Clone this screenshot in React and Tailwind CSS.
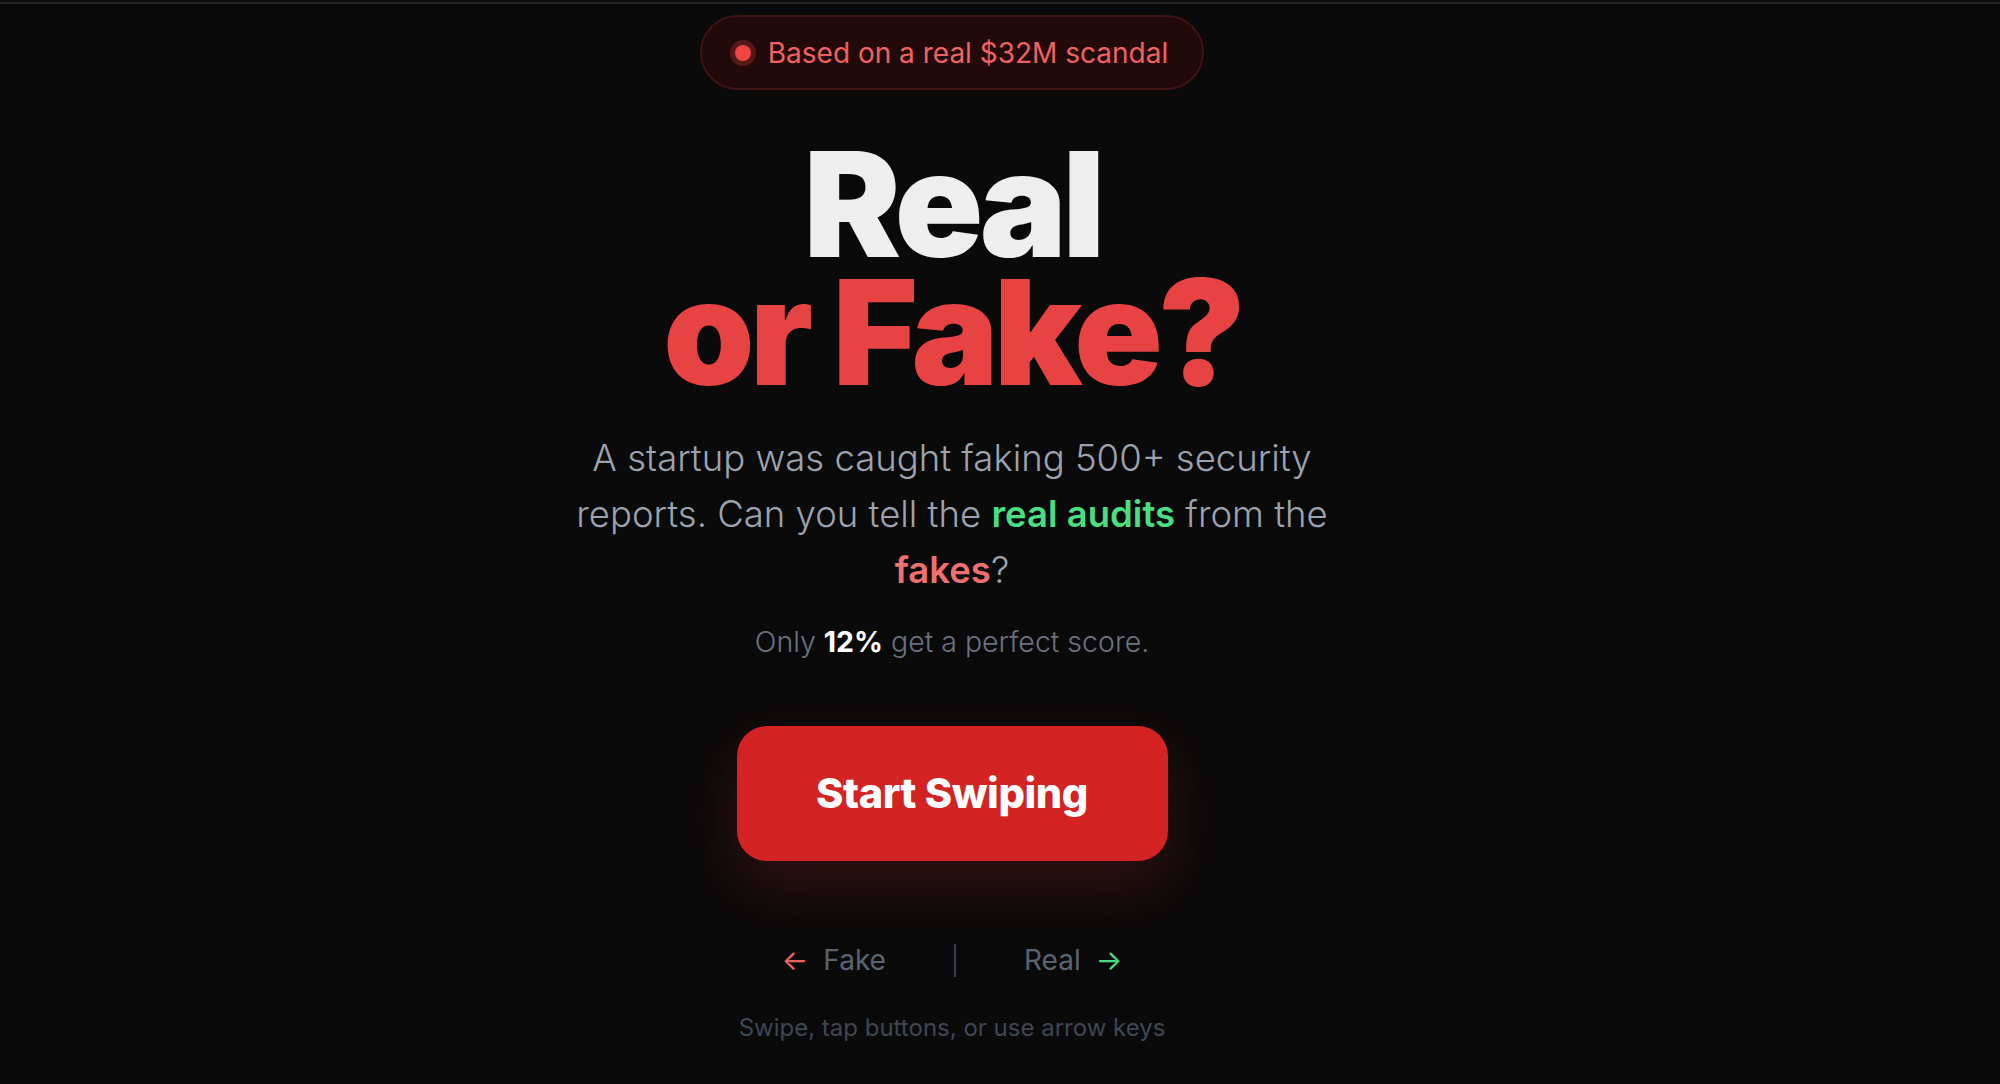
export default function App() {
  return (
    <div className="min-h-screen w-full bg-[#0a0a0a] font-['Inter',sans-serif] overflow-hidden">
      {/* top edge line */}
      <div className="pt-[2px]">
        <div className="h-[2px] bg-[#262626]" />
      </div>

      <main className="flex flex-col items-center pr-[96px] pt-[11px]">
        {/* badge */}
        <div className="flex items-center gap-[17px] h-[75px] pl-[33px] pr-[34px] rounded-full border-2 border-[#3f1414] bg-[#230a0a]">
          <span className="block w-[16px] h-[16px] rounded-full bg-[#ef4444] ring-[5px] ring-[#ef4444]/25" />
          <span className="text-[28px] text-[#f06262]">Based on a real $32M scandal</span>
        </div>

        {/* headline */}
        <h1 className="mt-[50px] text-center font-black text-[146px] leading-[128px] tracking-[-0.033em]">
          <span className="block text-[#eeeeee]">Real</span>
          <span className="block text-[#e84343]">or Fake?</span>
        </h1>

        {/* description */}
        <p className="mt-[34px] max-w-[800px] text-center text-[36.5px] leading-[56px] font-light text-[#9ca3af]">
          A startup was caught faking 500+ security reports. Can you tell the{' '}
          <span className="font-semibold text-[#4ade80]">real audits</span> from the{' '}
          <span className="font-semibold text-[#f07070]">fakes</span>?
        </p>

        <p className="mt-[24px] text-[28.5px] leading-[40px] font-light text-[#6b7280]">
          Only <span className="font-bold text-white">12%</span> get a perfect score.
        </p>

        {/* cta */}
        <button className="mt-[64px] w-[431px] h-[135px] rounded-[30px] bg-[#d32323] text-white text-[41.5px] font-extrabold tracking-[-0.01em] shadow-[0_24px_60px_rgba(211,35,35,0.22)]">
          Start Swiping
        </button>

        {/* controls hint */}
        <div className="mt-[79px] flex items-center h-[40px] text-[28px] text-[#5b6472]">
          <div className="flex items-center gap-[15px]">
            <span className="text-[#f06262]">←</span>
            <span>Fake</span>
          </div>
          <div className="mx-[68px] w-[2px] h-[33px] bg-[#374151]" />
          <div className="flex items-center gap-[15px]">
            <span>Real</span>
            <span className="text-[#4ade80]">→</span>
          </div>
        </div>

        <p className="mt-[32px] text-[24px] leading-[32px] text-[#3f4654]">
          Swipe, tap buttons, or use arrow keys
        </p>
      </main>
    </div>
  );
}
